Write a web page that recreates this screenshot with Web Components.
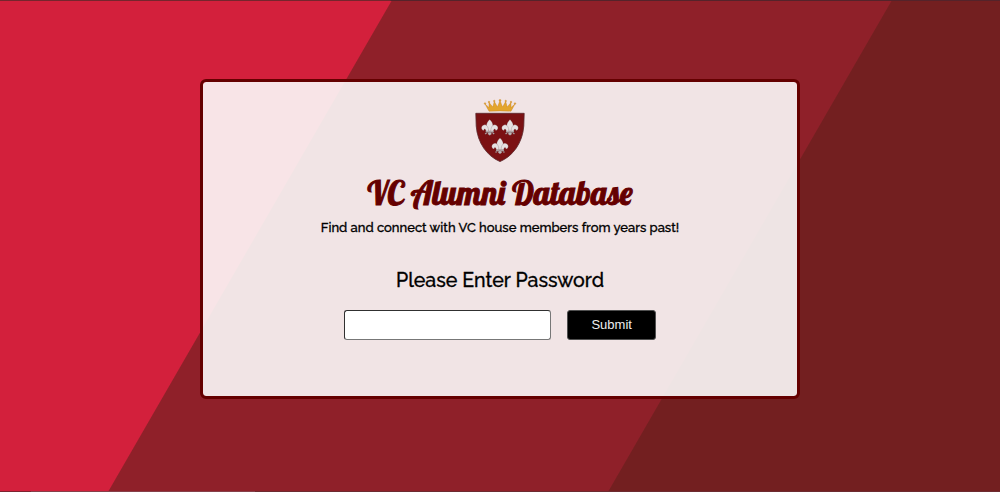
<!DOCTYPE html>
<html lang="en"><head><meta charset="utf-8"><title>VC Alumni Database</title>
<style>html,body{margin:0;height:100%;overflow:hidden}</style></head>
<body>
<login-page><login-card>
<house-crest slot="crest"></house-crest>
<span slot="title">VC Alumni Database</span>
<span slot="tagline">Find and connect with VC house members from years past!</span>
<password-form slot="form"></password-form>
</login-card></login-page>
<script>
const define=(name,html)=>customElements.define(name,class extends HTMLElement{
  constructor(){super();const t=document.createElement('template');t.innerHTML=html;
    this.attachShadow({mode:'open'}).append(t.content.cloneNode(true));}
});
define('login-page',`<style>
:host{display:grid;grid-template-rows:1px 1fr 1px;height:100vh;background:linear-gradient(120deg,#d3203c 339px,#8f2029 340px,#8f2029 772px,#731f20 773px)}
.top{background:linear-gradient(90deg,#75252d 390px,#54232a 391px)}
.bottom{background:linear-gradient(90deg,#7c2430 31px,#86404a 31px,#86404a 255px,#6d2b31 255px)}
main{display:flex;justify-content:center;align-items:flex-start;padding-top:78px}
</style><div class="top"></div><main><slot></slot></main><div class="bottom"></div>`);
define('login-card',`<style>
:host{display:flex;flex-direction:column;align-items:center;box-sizing:border-box;width:600px;height:320px;border:3px solid #650000;border-radius:6px;background:rgba(252,250,250,.9);background-clip:padding-box;padding-top:17px;color:#000;font-family:Raleway,Lato,"Open Sans",sans-serif}
h1{margin:7px 0 1px;height:46px;color:#650000;font:400 32.5px/46px Lobster,"Liberation Serif",serif;white-space:nowrap;-webkit-text-stroke:1px #650000}
p{margin:0;height:22px;font-size:13.03px;line-height:22px;font-weight:500;white-space:nowrap;-webkit-text-stroke:.3px #000}
</style><slot name="crest"></slot><h1><slot name="title"></slot></h1><p><slot name="tagline"></slot></p><slot name="form"></slot>`);
define('house-crest',`<style>:host{display:block;width:50px;height:64px}svg{display:block}</style>
<svg width="50" height="64" viewBox="0 0 50 64"><defs><g id="lily">
<path d="M0-8.5C-4.5-4-3.5-1-1.5 2V5H1.5V2C3.5-1 4.5-4 0-8.5Z"/>
<path d="M-1 4C-1-1-3-3.8-6-3-9-2-9 2-6 2.5-5.5 0-4 .5-3.5 4ZM1 4C1-1 3-3.8 6-3 9-2 9 2 6 2.5 5.5 0 4 .5 3.5 4Z"/>
<path d="M-4 3H4V4.5H-4ZM-1.2 4H1.2L2 6 0 7.5-2 6ZM-2 4.5-4 6.5-5 5.2ZM2 4.5 4 6.5 5 5.2Z" fill="#bdb7b8"/></g></defs>
<path d="M.8 14.3H49.2L48.8 27C47.5 44 38 57 25 62.6 12 57 2.5 44 1.2 27Z" fill="#7b1113" stroke="#59272b" stroke-width=".8"/>
<g fill="#e3a52d" stroke="#c7821c" stroke-width=".4"><path d="M14 12.2 10 5 14 8.5 14 3.5 17.8 8 19.3 2.5 22.5 8 25 1.5 27.5 8 30.7 2.5 32.2 8 36 3.5 36 8.5 40 5 36 12.2Q25 11.6 14 12.2Z"/><circle cx="10" cy="4.5" r=".8"/><circle cx="14" cy="3" r=".8"/><circle cx="19.3" cy="2" r=".8"/><circle cx="25" cy="1.3" r=".9"/><circle cx="30.7" cy="2" r=".8"/><circle cx="36" cy="3" r=".8"/><circle cx="40" cy="4.5" r=".8"/></g>
<g fill="#e6e1e2" stroke="#5b3437" stroke-width=".2"><use href="#lily" x="14.7" y="29"/><use href="#lily" x="35" y="29"/><use href="#lily" x="25" y="47.5"/></g></svg>`);
define('password-form',`<style>
:host{display:block;width:312px;padding-top:28px}
h2{margin:0 -10px;text-align:center;font-size:19.6px;line-height:27px;height:26px;font-weight:500;-webkit-text-stroke:.3px #000;white-space:nowrap}
form{display:flex;gap:16px;margin-top:17px}
input,button{box-sizing:border-box;height:30px;border-radius:3px;margin:0}
input{width:208px;border:1.5px solid;border-color:#303030 #777 #777 #303030;background:#fff;padding:0 8px}
button{width:89px;background:#000;color:#eee;border:1.5px solid #505050;padding:0 0 1px;font:13px "Liberation Sans",sans-serif}
</style><h2>Please Enter Password</h2><form><input type="password" aria-label="Password"><button type="button">Submit</button></form>`);
</script></body></html>
